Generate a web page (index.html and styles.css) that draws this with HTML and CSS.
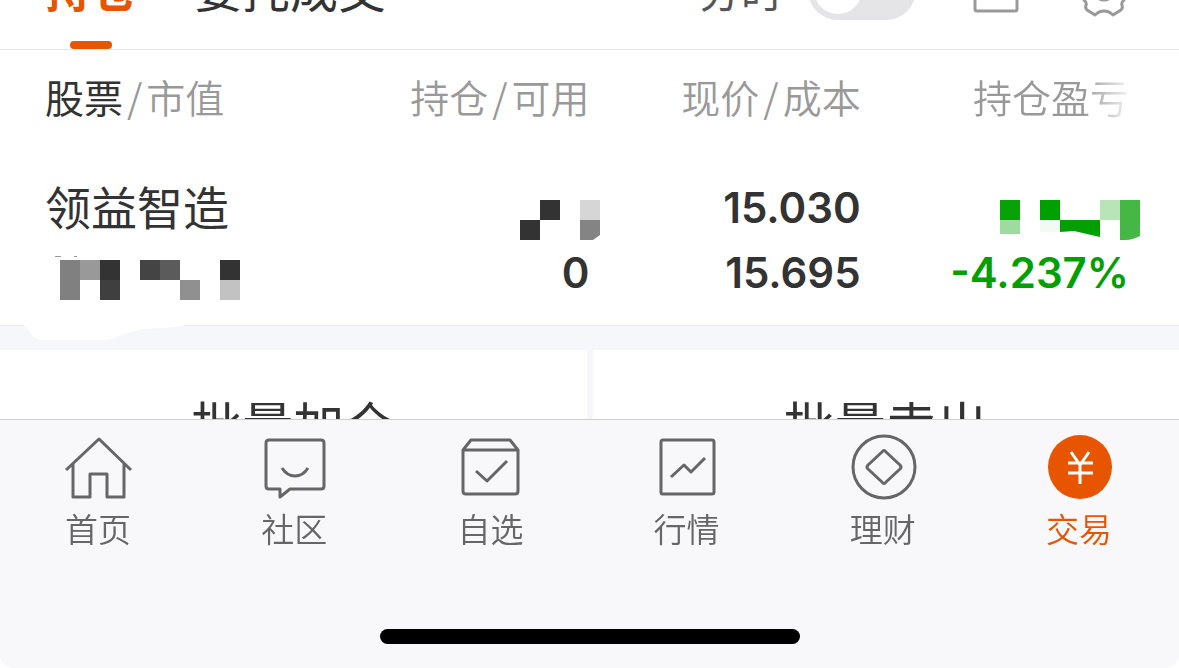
FILE: index.html
```html
<!DOCTYPE html>
<html lang="zh-CN">

<head>
    <meta charset="UTF-8">
    <meta name="viewport" content="width=device-width, initial-scale=1.0">
    <title>持仓</title>
    <link rel="stylesheet" href="styles.css">
</head>

<body>
    <header class="topbar">
        <button type="button" class="tab active">持仓</button>
        <button type="button" class="tab">委托成交</button>
        <div class="tools">
            <label for="timeSwitch">分时</label>
            <input type="checkbox" id="timeSwitch" class="switch">
            <button type="button" class="tool" aria-label="窗口">
                <svg width="56" height="56" viewBox="0 0 56 56" fill="none" stroke="#999" stroke-width="3">
                    <rect x="7" y="7" width="42" height="42" rx="2" />
                </svg>
            </button>
            <button type="button" class="tool" aria-label="设置">
                <svg width="56" height="56" viewBox="0 0 56 56" fill="none" stroke="#999" stroke-width="3" stroke-linejoin="round">
                    <path d="M8 38Q11 41 10 43Q9 46 11 48L19 53Q23 49 28 49T37 53L45 48Q47 46 46 43Q45 41 48 38L52 28L48 18Q45 15 46 13Q47 10 45 8L37 3Q33 7 28 7T19 3L11 8Q9 10 10 13Q11 15 8 18L4 28Z" />
                    <circle cx="28" cy="28" r="10" />
                </svg>
            </button>
        </div>
    </header>

    <main>
        <section class="holdings">
            <table>
                <thead>
                    <tr>
                        <th class="name"><b>股票</b><i>/</i>市值</th>
                        <th>持仓<i>/</i>可用</th>
                        <th>现价<i>/</i>成本</th>
                        <th class="fade">持仓盈亏</th>
                    </tr>
                </thead>
                <tbody>
                    <tr>
                        <td class="name">
                            <div class="stock">领益智造</div>
                            <!-- 打码的市值 -->
                            <svg class="mosaic" width="200" height="65" viewBox="0 0 200 65">
                                <path fill="#999" d="M10 16h6v1h-6zM29 16h3v1h-3z" />
                                <path fill="#808080" d="M15 20h20v40h-20z" />
                                <path fill="#999" d="M35 20h20v20h-20z" />
                                <path fill="#333" d="M55 20h20v20h-20zM175 20h20v20h-20z" />
                                <path fill="#3f3f3f" d="M55 40h20v20h-20z" />
                                <path fill="#444" d="M95 20h20v20h-20z" />
                                <path fill="#5b5b5b" d="M115 20h20v20h-20z" />
                                <path fill="#909090" d="M135 40h20v20h-20z" />
                                <path fill="#c2c2c2" d="M175 40h20v20h-20z" />
                            </svg>
                        </td>
                        <td>
                            <svg class="mosaic over" width="80" height="65" viewBox="0 0 80 65">
                                <path fill="#333" d="M20 25h20v20h-20zM0 45h20v20h-20z" />
                                <path fill="#d6d6d6" d="M60 25h20v20h-20z" />
                                <path fill="#848484" d="M60 45h20v15l-7 5h-13z" />
                            </svg>
                            <div>0</div>
                        </td>
                        <td>
                            <div>15.030</div>
                            <div>15.695</div>
                        </td>
                        <td class="down">
                            <svg class="mosaic over" width="140" height="65" viewBox="0 0 140 65">
                                <path fill="#06a206" d="M0 25h20v20h-20z" />
                                <path fill="#9fda9f" d="M0 45h20v14h-20z" />
                                <path fill="#00a000" d="M40 25h20v20h-20zM60 45h40v17l-26-6l-14 1z" />
                                <path fill="#f3f9f3" d="M40 45h20v12h-20z" />
                                <path fill="#b8e5b8" d="M100 25h20v20h-20z" />
                                <path fill="#44b744" d="M120 25h20v36q-8 4-14 4h-6z" />
                            </svg>
                            <div>-4.237%</div>
                        </td>
                    </tr>
                </tbody>
            </table>
            <svg class="smear" width="162" height="16" viewBox="0 0 162 16">
                <path fill="#fff" d="M0 0H162Q150 3 118 4Q104 7 90 13Q85 15 78 15H20Q12 15 8 10Z" />
            </svg>
        </section>

        <div class="batch">
            <button type="button">批量加仓</button>
            <button type="button">批量卖出</button>
        </div>
    </main>

    <nav class="tabbar">
        <div class="items">
            <a href="#">
                <svg width="72" height="72" viewBox="0 0 72 72">
                    <path d="M4 39L37 8L69 39M11 33V66H28V43H45V66H62V33" />
                </svg>
                首页
            </a>
            <a href="#">
                <svg width="72" height="72" viewBox="0 0 72 72">
                    <path d="M11 9H63Q66 9 66 12V55Q66 58 63 58H32L22 66V58H11Q8 58 8 55V12Q8 9 11 9ZM24 37Q29 45 37 45T50 37" />
                </svg>
                社区
            </a>
            <a href="#">
                <svg width="72" height="72" viewBox="0 0 72 72">
                    <path d="M9 19L17 9H56L64 19V60Q64 63 61 63H12Q9 63 9 60ZM9 19H64M22 40L33 50L53 30" />
                </svg>
                自选
            </a>
            <a href="#">
                <svg width="72" height="72" viewBox="0 0 72 72">
                    <rect x="10" y="9" width="53" height="54" rx="2" />
                    <path d="M20 46L33 34L40 41L54 27" />
                </svg>
                行情
            </a>
            <a href="#">
                <svg width="72" height="72" viewBox="0 0 72 72">
                    <circle cx="37" cy="36" r="31" />
                    <path d="M35 21Q37 18 39 21L53 34Q55 36 53 38L39 51Q37 54 35 51L21 38Q19 36 21 34Z" />
                </svg>
                理财
            </a>
            <a href="#" class="active">
                <svg width="72" height="72" viewBox="0 0 72 72">
                    <circle class="coin" cx="37" cy="36" r="32" />
                    <path class="yen" d="M28 21L37 34L46 21M25 32H50M25 42H50M37 33V53" />
                </svg>
                交易
            </a>
        </div>
        <div class="homebar"></div>
    </nav>
</body>

</html>
```
FILE: styles.css
```css
* {
    box-sizing: border-box;
}
body {
    margin: 0;
    height: 100vh;
    overflow: hidden;
    background: #fff;
    color: #333;
    font-family: "Noto Sans CJK SC", sans-serif;
}
button {
    border: 0;
    padding: 0;
    background: none;
    color: inherit;
    font-family: inherit;
}
svg {
    display: block;
}

/* 顶部标签 */
.topbar {
    display: flex;
    align-items: flex-end;
    gap: 57px;
    height: 50px;
    padding: 0 47px 0 45px;
    border-bottom: 1px solid #e9e9e9;
    overflow: hidden;
}
.tab {
    position: relative;
    flex: none;
    padding-bottom: 32px;
    font-size: 48px;
    line-height: 60px;
}
.tab.active {
    color: #e85500;
    font-size: 46px;
    font-weight: 700;
}
.tab.active::after {
    content: "";
    position: absolute;
    left: 50%;
    bottom: 0;
    width: 42px;
    height: 8px;
    margin-left: -21px;
    border-radius: 4px;
    background: #e85500;
}
.tools {
    display: flex;
    align-items: center;
    margin-left: auto;
    padding-bottom: 29px;
    color: #555;
    font-size: 42px;
    line-height: 60px;
}
.switch {
    appearance: none;
    width: 108px;
    height: 60px;
    margin: 0 0 0 25px;
    padding: 6px;
    border-radius: 30px;
    background: #e5e5e7;
}
.switch::before {
    content: "";
    display: block;
    width: 48px;
    height: 48px;
    border-radius: 50%;
    background: #fff;
}
.switch:checked {
    background: #e85500;
}
.switch:checked::before {
    margin-left: auto;
}
.tool {
    margin-left: 52px;
}

/* 持仓列表 */
.holdings {
    position: relative;
    border-bottom: 1px solid #ebebed;
}
table {
    width: 100%;
    table-layout: fixed;
    border-collapse: collapse;
}
th {
    height: 92px;
    padding: 0;
    color: #999;
    font-size: 39px;
    font-weight: 350;
    text-align: right;
    white-space: nowrap;
}
th b {
    color: #333;
    font-weight: 400;
}
th i {
    margin: 0 4px;
    font-style: normal;
}
th:nth-child(1),
th:nth-child(3) {
    width: 23%;
}
th.name {
    width: 28%;
}
th:nth-child(2) {
    width: 22%;
}
th:last-child,
td:last-child {
    padding-right: 50px;
}
th.name,
td.name {
    padding-left: 45px;
    text-align: left;
}
.fade {
    -webkit-mask-image: linear-gradient(to right, #000 70%, transparent 86%);
    mask-image: linear-gradient(to right, #000 70%, transparent 86%);
}
td {
    padding: 33px 0 20px;
    font-family: Inter, sans-serif;
    font-size: 42px;
    font-weight: 600;
    line-height: 65px;
    text-align: right;
    vertical-align: top;
}
.stock {
    padding-bottom: 5px;
    font-family: "Noto Sans CJK SC", sans-serif;
    font-size: 46px;
    font-weight: 400;
    line-height: 60px;
}
.down {
    color: #00a000;
}
.mosaic.over {
    margin-left: auto;
    margin-right: -11px;
}
.smear {
    position: absolute;
    left: 24px;
    top: 100%;
}

/* 批量操作 */
.batch {
    display: flex;
    gap: 6px;
    padding-top: 24px;
    background: #f5f7fa;
}
.batch button {
    flex: 1;
    height: 146px;
    background: #fff;
    font-size: 51px;
}

/* 底部导航 */
.tabbar {
    position: fixed;
    left: 0;
    right: 0;
    bottom: 0;
    padding: 11px 0 24px;
    border-top: 1px solid #d0d0d2;
    border-radius: 0 0 14px 14px;
    background: #f8f8fb;
    box-shadow: 0 14px 0 #fff;
}
.items {
    display: flex;
    padding-right: 2px;
}
.items a {
    flex: 1;
    display: flex;
    flex-direction: column;
    align-items: center;
    color: #666;
    font-size: 33px;
    font-weight: 350;
    line-height: 50px;
    text-decoration: none;
}
.items a.active {
    color: #e85500;
}
.items svg {
    fill: none;
    stroke: #666;
    stroke-width: 3;
    stroke-linejoin: round;
}
.items .coin {
    fill: #e85500;
    stroke: none;
}
.items .yen {
    stroke: #fff;
}
.homebar {
    width: 420px;
    height: 15px;
    margin: 76px auto 0;
    border-radius: 8px;
    background: #000;
}
```
